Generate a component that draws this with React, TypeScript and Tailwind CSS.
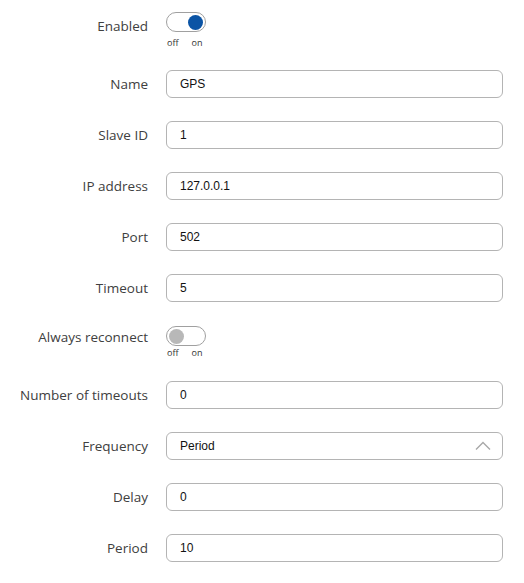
import React from "react";

const labelCls =
  "w-[148px] shrink-0 text-right text-[13.5px] text-[#404040] leading-[20px]";
const labelFont = { fontFamily: '"Open Sans", sans-serif' } as const;

function Toggle({ on, gap }: { on: boolean; gap: string }) {
  return (
    <div className="flex flex-col">
      <div
        className={`w-[40px] h-[20px] rounded-full border border-[#a0a0a0] bg-white flex items-center px-[2px] ${
          on ? "justify-end" : "justify-start"
        }`}
      >
        <div
          className={`w-[15px] h-[15px] rounded-full ${
            on ? "bg-[#0b54a5]" : "bg-[#b8b8b8]"
          }`}
        />
      </div>
      <div
        className={`flex text-[9px] leading-[12px] text-[#333] pl-[1px] ${gap}`}
        style={{ fontFamily: '"Open Sans", sans-serif' }}
      >
        <span>off</span>
        <span className="ml-[13px]">on</span>
      </div>
    </div>
  );
}

function InputRow({
  label,
  value,
  select,
}: {
  label: string;
  value: string;
  select?: boolean;
}) {
  return (
    <div className="flex items-center">
      <div className={labelCls} style={labelFont}>
        {label}
      </div>
      <div className="ml-[18px] flex-1 h-[28px] rounded-[6px] border border-[#b4b4b4] bg-white flex items-center pl-[13px] pr-[10px]">
        <span
          className="text-[12px] text-[#111] flex-1"
          style={{ fontFamily: '"Liberation Sans", Arial, sans-serif' }}
        >
          {value}
        </span>
        {select && (
          <svg width="16" height="10" viewBox="0 0 16 10" className="mr-[1px]">
            <path
              d="M1 8.5 L8 1.5 L15 8.5"
              fill="none"
              stroke="#a8a8a8"
              strokeWidth="1.4"
            />
          </svg>
        )}
      </div>
    </div>
  );
}

function ToggleRow({
  label,
  on,
  pt,
  gap,
}: {
  label: string;
  on: boolean;
  pt: string;
  gap: string;
}) {
  return (
    <div className="flex items-start">
      <div className={`${labelCls} ${pt}`} style={labelFont}>
        {label}
      </div>
      <div className="ml-[18px]">
        <Toggle on={on} gap={gap} />
      </div>
    </div>
  );
}

export default function App() {
  return (
    <div className="w-[524px] h-[583px] bg-white pr-[21px] pt-[12px]">
      <ToggleRow label="Enabled" on={true} pt="pt-[4px]" gap="mt-[5px]" />
      <div className="mt-[21px] flex flex-col gap-[23px]">
        <InputRow label="Name" value="GPS" />
        <InputRow label="Slave ID" value="1" />
        <InputRow label="IP address" value="127.0.0.1" />
        <InputRow label="Port" value="502" />
        <InputRow label="Timeout" value="5" />
      </div>
      <div className="mt-[24px]">
        <ToggleRow
          label="Always reconnect"
          on={false}
          pt="pt-[1px]"
          gap="mt-[1px]"
        />
      </div>
      <div className="mt-[22px] flex flex-col gap-[23px]">
        <InputRow label="Number of timeouts" value="0" />
        <InputRow label="Frequency" value="Period" select />
        <InputRow label="Delay" value="0" />
        <InputRow label="Period" value="10" />
      </div>
    </div>
  );
}
